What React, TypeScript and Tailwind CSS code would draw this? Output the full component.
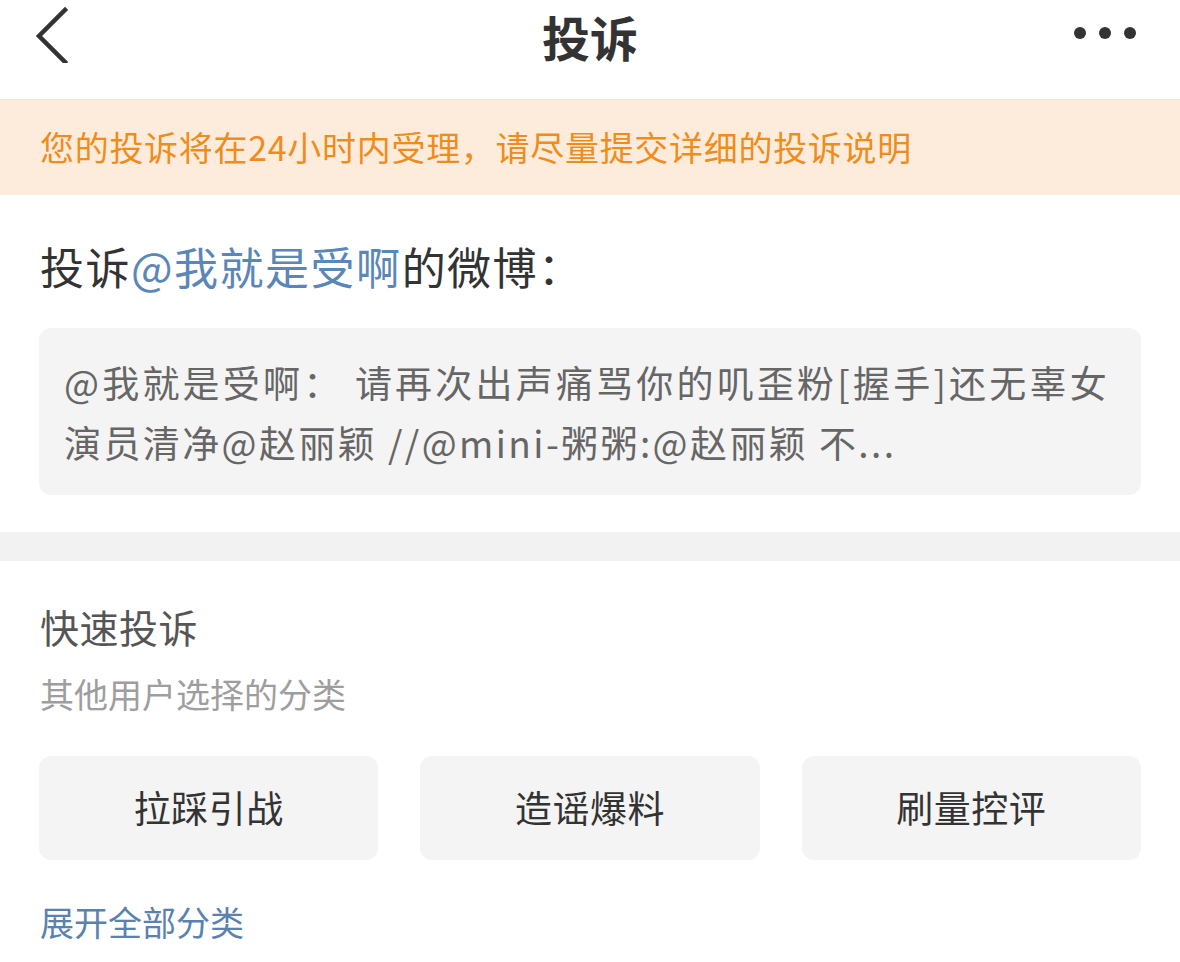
const font = { fontFamily: '"Noto Sans CJK SC", "Noto Sans", sans-serif' }

function BackIcon() {
  return (
    <svg width="40" height="60" viewBox="0 0 40 60" fill="none">
      <path d="M31 7 L5 33 L31 59" stroke="#333" strokeWidth="4.5" strokeLinecap="square" strokeLinejoin="miter" />
    </svg>
  )
}

function MoreIcon() {
  return (
    <svg width="70" height="20" viewBox="0 0 70 20" fill="#333">
      <circle cx="10" cy="10" r="6" />
      <circle cx="35" cy="10" r="6" />
      <circle cx="60" cy="10" r="6" />
    </svg>
  )
}

export default function App() {
  const quick = ['拉踩引战', '造谣爆料', '刷量控评']

  return (
    <div className="w-[1180px] h-[962px] bg-white overflow-hidden" style={font}>
      {/* header */}
      <div className="h-[99px] relative">
        <div className="absolute left-[34px] top-[3px]">
          <BackIcon />
        </div>
        <div className="text-center pt-[5px] text-[48px] leading-[62px] font-bold text-[#333]">投诉</div>
        <div className="absolute left-[1070px] top-[23px]">
          <MoreIcon />
        </div>
      </div>

      {/* notice banner */}
      <div className="h-[96px] bg-[#fdecdb] border-t border-[#f3e6da] flex items-center px-[40px] pb-[3px]">
        <span className="text-[34px] tracking-[0.7px] text-[#ef8c1c]">您的投诉将在24小时内受理，请尽量提交详细的投诉说明</span>
      </div>

      {/* target */}
      <div className="px-[39px] pt-[41px] pb-[37px]">
        <div className="text-[44px] leading-[60px] tracking-[1.5px] text-[#333] pl-[1px]">
          投诉<span className="text-[#5a86b8]">@我就是受啊</span>的微博：
        </div>
        <div className="mt-[32px] h-[167px] rounded-[12px] bg-[#f4f4f4] px-[25px] pt-[24px]">
          <p className="text-[37px] leading-[60px] tracking-[3.2px] text-[#666] whitespace-nowrap">
            @我就是受啊：&nbsp;请再次出声痛骂你的叽歪粉[握手]还无辜女
            <br />
            <span className="tracking-[2.4px]">演员清净@赵丽颖 //@mini-粥粥:@赵丽颖 不...</span>
          </p>
        </div>
      </div>

      <div className="h-[29px] bg-[#f2f2f2]" />

      {/* quick complaint */}
      <div className="px-[39px] pt-[41px]">
        <div className="text-[39px] leading-[48px] tracking-[0.5px] text-[#555] pl-[1px]">快速投诉</div>
        <div className="mt-[23px] text-[34px] leading-[42px] text-[#9e9e9e] pl-[1px]">其他用户选择的分类</div>
        <div className="mt-[41px] grid grid-cols-3 gap-[42px]">
          {quick.map((q) => (
            <div key={q} className="h-[104px] rounded-[12px] bg-[#f4f4f4] flex items-center justify-center text-[37px] tracking-[0.5px] text-[#333]">
              {q}
            </div>
          ))}
        </div>
        <div className="mt-[42px] text-[34px] leading-[40px] text-[#5a82ae] pl-[1px]">展开全部分类</div>
      </div>
    </div>
  )
}
